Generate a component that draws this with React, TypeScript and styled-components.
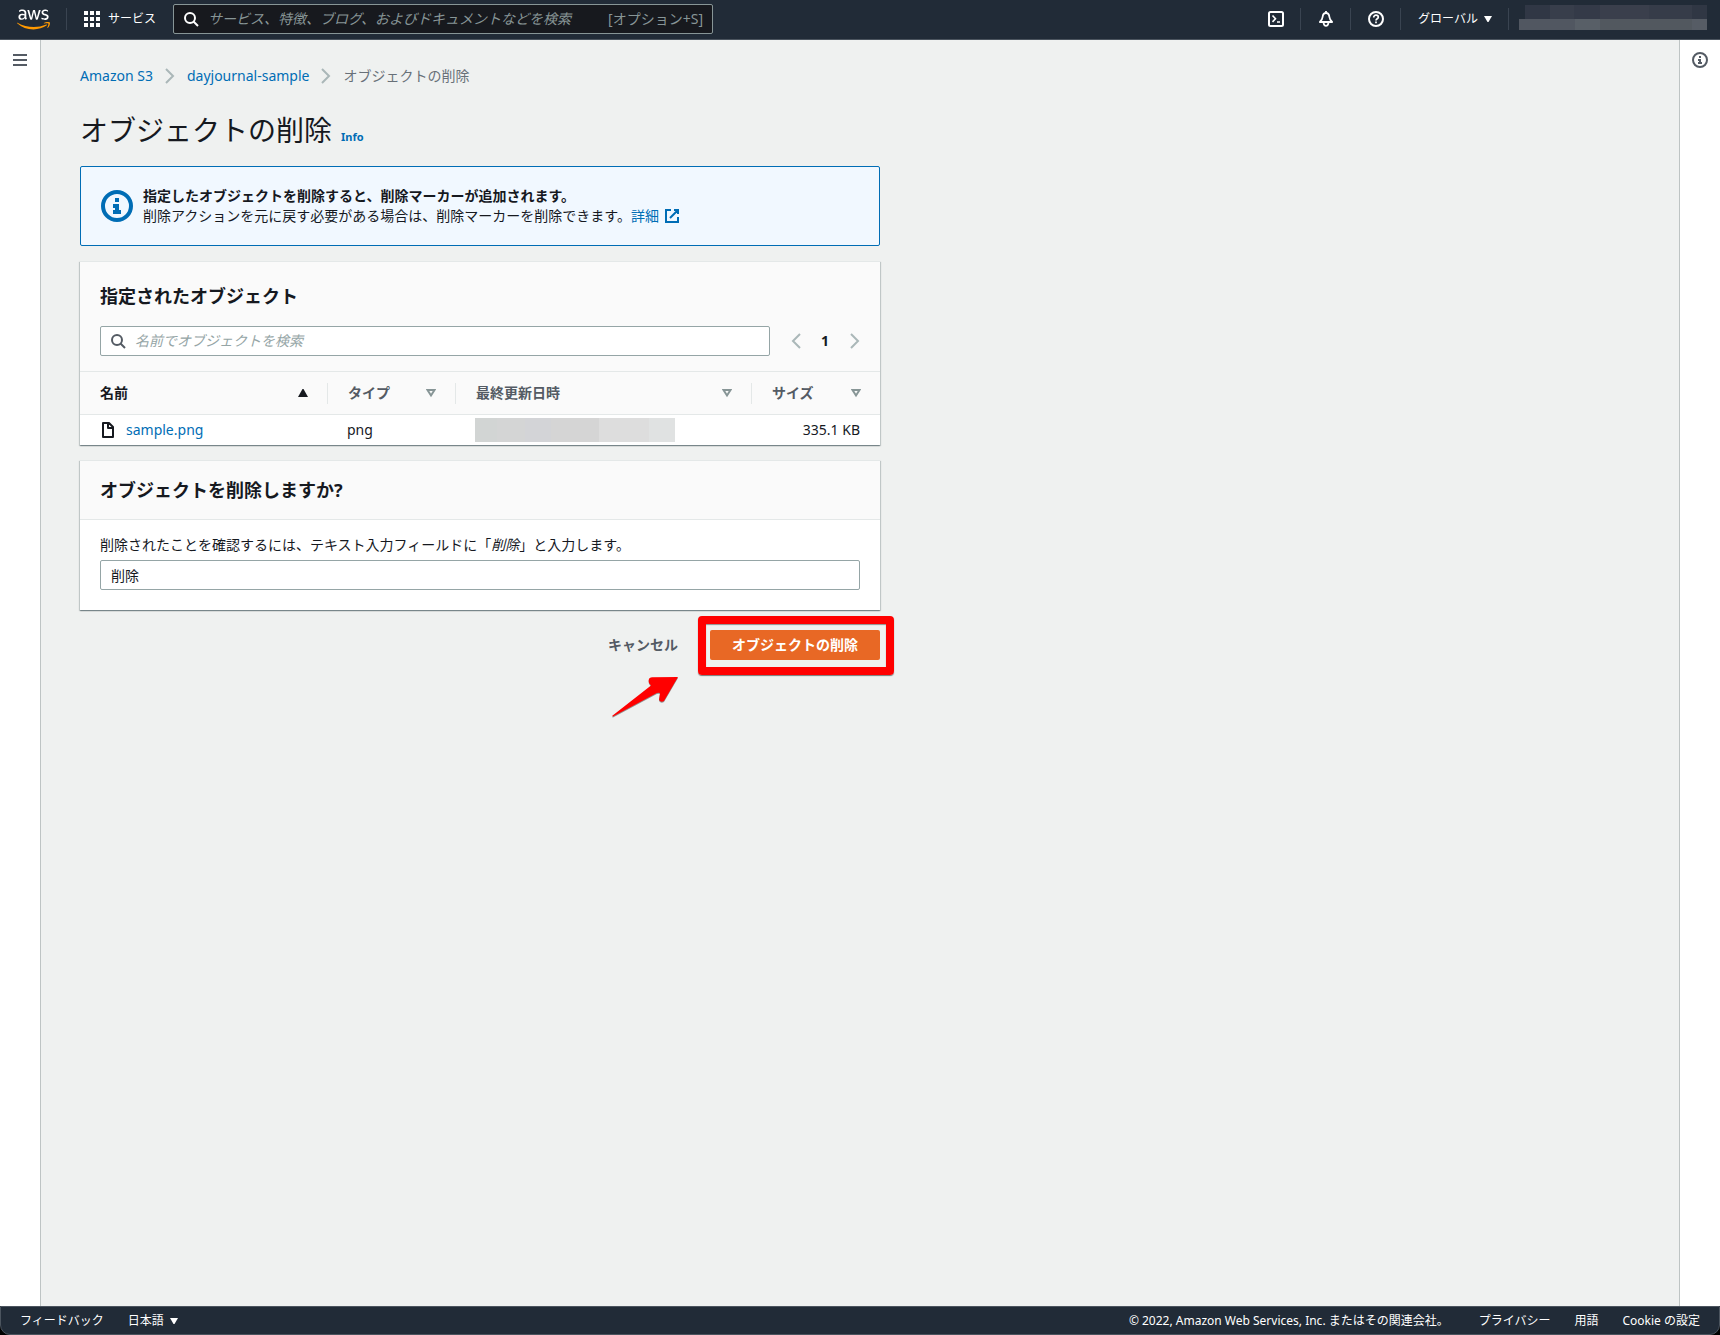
import React, { useState } from 'react';
import styled, { createGlobalStyle, css } from 'styled-components';
import { FaAws } from 'react-icons/fa';

const fontStack = `"Noto Sans", "Noto Sans CJK JP", sans-serif`;

const color = {
  nav: '#212b37',
  navDark: '#17191e',
  navBorder: '#4b545e',
  page: '#eff1f0',
  white: '#ffffff',
  panelHead: '#fafafa',
  line: '#e4e8e8',
  inputLine: '#95a5a6',
  muted: '#545b64',
  faint: '#879596',
  placeholder: '#95a5a6',
  text: '#16191f',
  link: '#006db5',
  info: '#f1f8ff',
  orange: '#e86825',
  red: '#ff0000',
};

const GlobalStyle = createGlobalStyle`
  *, *::before, *::after { box-sizing: border-box; }
  body {
    margin: 0;
    background: #000;
    color: ${color.text};
    font-family: ${fontStack};
    font-size: 14px;
    line-height: 20px;
  }
  h1, h2, p, ol { margin: 0; padding: 0; }
  button, input { font: inherit; color: inherit; }
  a { color: ${color.link}; text-decoration: none; }
`;

const Shell = styled.div`
  min-height: 100vh;
  display: flex;
  flex-direction: column;
`;

/* ---------- icons ---------- */

const Glyph = styled.svg<{ $size?: number }>`
  display: block;
  flex: none;
  width: ${(p) => p.$size ?? 16}px;
  height: ${(p) => p.$size ?? 16}px;
  fill: none;
  stroke: currentColor;
  stroke-width: 2;
`;

type IconProps = { size?: number };

const SearchIcon = () => (
  <Glyph viewBox="0 0 16 16" aria-hidden="true">
    <circle cx="7" cy="7" r="5" />
    <path d="M15 15l-4.5-4.5" />
  </Glyph>
);

const InfoIcon = ({ size }: IconProps) => (
  <Glyph viewBox="0 0 16 16" $size={size} aria-hidden="true">
    <circle cx="8" cy="8" r="7" />
    <path d="M8 11V8H6M6 11h4M8 6V4" />
  </Glyph>
);

const ExternalIcon = () => (
  <Glyph viewBox="0 0 16 16" aria-hidden="true">
    <path d="M10 2h4v4M6 10l8-8M14 9v5H2V2h5" />
  </Glyph>
);

const FileIcon = () => (
  <Glyph viewBox="0 0 16 16" aria-hidden="true">
    <path d="M3 1v14h10V5L9 1zM8 1v5h5" strokeLinejoin="round" />
  </Glyph>
);

const AngleRight = () => (
  <Glyph viewBox="0 0 16 16" aria-hidden="true">
    <path d="M4 1l7 7-7 7" />
  </Glyph>
);

const PageBack = () => (
  <Glyph viewBox="0 0 16 16" aria-hidden="true">
    <path d="M10 1L3 8l7 7" />
  </Glyph>
);

const PageForward = () => (
  <Glyph viewBox="0 0 16 16" aria-hidden="true">
    <path d="M7 1l7 7-7 7" />
  </Glyph>
);

const MenuIcon = () => (
  <Glyph viewBox="0 0 16 16" aria-hidden="true">
    <path d="M1 3h14M1 8h14M1 13h14" />
  </Glyph>
);

const GridIcon = () => (
  <Glyph viewBox="0 0 16 16" aria-hidden="true">
    <path
      d="M0 0h4v4H0zM6 0h4v4H6zM12 0h4v4h-4zM0 6h4v4H0zM6 6h4v4H6zM12 6h4v4h-4zM0 12h4v4H0zM6 12h4v4H6zM12 12h4v4h-4z"
      fill="currentColor"
      stroke="none"
    />
  </Glyph>
);

const ShellIcon = () => (
  <Glyph viewBox="0 0 16 16" aria-hidden="true">
    <rect x="1" y="1" width="14" height="14" rx="1.5" />
    <path d="M4.5 4.5L7.5 7.700l-3 3.200M9 11h3" strokeWidth="1.600" />
  </Glyph>
);

const BellIcon = () => (
  <Glyph viewBox="0 0 16 16" aria-hidden="true">
    <path
      d="M8 2C5.600 2 4.800 3.800 4.600 6c-.2 2-.9 3.200-2.700 5h12.200c-1.800-1.800-2.500-3-2.700-5C11.200 3.800 10.400 2 8 2zM8 0v2"
      strokeWidth="1.800"
      strokeLinejoin="round"
    />
    <path d="M5.600 12c.2 1.800 1.200 2.900 2.400 2.900s2.200-1.100 2.400-2.900" strokeWidth="1.800" />
  </Glyph>
);

const HelpIcon = () => (
  <Glyph viewBox="0 0 16 16" aria-hidden="true">
    <circle cx="8" cy="8" r="7" />
    <path d="M5.700 6.500C5.700 5 6.700 4.200 8 4.200s2.300.8 2.300 2c0 1.500-2.300 1.600-2.300 3.300M8 10.600v1.700" strokeWidth="1.700" />
  </Glyph>
);

const CaretDown = () => (
  <Glyph viewBox="0 0 8 8" $size={8} aria-hidden="true">
    <path d="M0 1h8L4.500 7h-1z" fill="currentColor" stroke="none" />
  </Glyph>
);

const SortAsc = () => (
  <Glyph viewBox="0 0 10 10" $size={10} aria-hidden="true">
    <path d="M0 9h10L5.500 1h-1z" fill="currentColor" stroke="none" />
  </Glyph>
);

const SortNone = () => (
  <Glyph viewBox="0 0 10 10" $size={10} aria-hidden="true">
    <path d="M1.500 2h7L5 7.500z" />
  </Glyph>
);

/* ---------- top navigation ---------- */

const TopBar = styled.header`
  display: flex;
  align-items: center;
  height: 40px;
  padding: 0 13px 1px 17px;
  background: ${color.nav};
  border-bottom: 1px solid ${color.navBorder};
  color: ${color.white};
  font-size: 12px;
`;

const LogoLink = styled.a`
  display: flex;
  width: 33px;
  margin-right: 16px;
`;

const GradientDefs = styled.svg`
  position: absolute;
  width: 0;
  height: 0;
`;

const Divider = styled.span`
  width: 1px;
  height: 22px;
  background: #3a4451;
`;

const NavButton = styled.button<{ $right?: number; $gap?: number }>`
  display: flex;
  align-items: center;
  gap: ${(p) => p.$gap ?? 6}px;
  border: 0;
  padding: 0 ${(p) => p.$right ?? 16}px 0 17px;
  background: none;
  cursor: pointer;
`;

const GlobalSearch = styled.form`
  display: flex;
  align-items: center;
  flex: 0 1 540px;
  height: 30px;
  padding: 0 9px;
  gap: 9px;
  border: 1px solid ${color.faint};
  border-radius: 2px;
  background: ${color.navDark};
  font-size: 14px;
`;

const BareInput = styled.input<{ $tone: string }>`
  flex: 1;
  min-width: 0;
  border: 0;
  outline: 0;
  padding: 0;
  background: transparent;
  &::placeholder {
    color: ${(p) => p.$tone};
    font-style: italic;
    opacity: 1;
  }
`;

const Shortcut = styled.span`
  color: ${color.faint};
`;

const NavRight = styled.div`
  display: flex;
  align-items: center;
  margin-left: auto;
`;

const Account = styled.div`
  display: flex;
  flex-direction: column;
  width: 188px;
  margin-left: 10px;
  padding-bottom: 3px;
`;

const AccountTop = styled.span`
  height: 14px;
  margin-left: 6px;
  background: linear-gradient(90deg, #303745 14%, #383e4b 14% 27%, #343a48 27% 41%, #3a3f4c 41% 68%, #363c49 68% 92%, #303744 92%);
`;

const AccountBottom = styled.span`
  height: 11px;
  background: linear-gradient(90deg, #515761 30%, #585f67 30% 43%, #52585f 43% 92%, #565c65 92%);
`;

/* ---------- page frame ---------- */

const Frame = styled.div`
  flex: 1;
  display: grid;
  grid-template-columns: 41px minmax(0, 1fr) 41px;
  background: ${color.page};
`;

const Rail = styled.aside<{ $side: 'left' | 'right' }>`
  display: flex;
  align-items: flex-start;
  justify-content: center;
  padding-top: 12px;
  background: ${color.white};
  color: ${color.muted};
  ${(p) =>
    p.$side === 'left'
      ? css`border-right: 1px solid #bec4c4;`
      : css`border-left: 1px solid #bec4c4;`}
`;

const IconButton = styled.button`
  display: flex;
  border: 0;
  padding: 0;
  background: none;
  color: inherit;
  cursor: pointer;
`;

const Main = styled.main`
  padding: 26px 39px 40px;
`;

const Column = styled.div`
  max-width: 800px;
`;

const Crumbs = styled.ol`
  display: flex;
  align-items: center;
  gap: 9px;
  list-style: none;
  color: #687078;
`;

const CrumbSeparator = styled.li`
  color: #aab7b8;
`;

const TitleRow = styled.div`
  display: flex;
  align-items: baseline;
  gap: 9px;
  margin: 26px 0 18px;
`;

const Title = styled.h1`
  font-size: 28px;
  line-height: 36px;
  font-weight: 400;
`;

const InfoLink = styled.a`
  font-size: 11px;
  font-weight: 700;
`;

const Stack = styled.div`
  display: flex;
  flex-direction: column;
  gap: 15px;
`;

const Alert = styled.section`
  display: flex;
  align-items: center;
  gap: 10px;
  padding: 19px 20px;
  border: 1px solid ${color.link};
  border-radius: 2px;
  background: ${color.info};
`;

const AlertIcon = styled.span`
  color: ${color.link};
`;

const ExternalLink = styled.a`
  display: inline-flex;
  align-items: center;
  gap: 5px;
  vertical-align: top;
`;

/* ---------- panels ---------- */

const Panel = styled.section`
  border-top: 1px solid ${color.line};
  background: ${color.white};
  box-shadow: 0 1px 1px 0 rgba(0, 28, 36, 0.3), 1px 1px 1px 0 rgba(0, 28, 36, 0.15),
    -1px 1px 1px 0 rgba(0, 28, 36, 0.15);
`;

const PanelHead = styled.div<{ $tall?: boolean }>`
  padding: ${(p) => (p.$tall ? '23px 20px 15px' : '18px 20px')};
  border-bottom: 1px solid ${color.line};
  background: ${color.panelHead};
`;

const Heading = styled.h2`
  font-size: 18px;
  line-height: 22px;
  font-weight: 700;
`;

const Tools = styled.div`
  display: flex;
  align-items: center;
  gap: 20px;
  margin-top: 19px;
`;

const FilterBox = styled.label`
  display: flex;
  align-items: center;
  flex: 1;
  height: 30px;
  padding: 0 9px;
  gap: 9px;
  border: 1px solid ${color.inputLine};
  border-radius: 2px;
  background: ${color.white};
  color: ${color.muted};
`;

const Pager = styled.nav`
  display: flex;
  align-items: center;
  justify-content: space-between;
  width: 70px;
  color: #aab7b8;
`;

const PageNumber = styled.span`
  color: ${color.text};
  font-weight: 700;
`;

const Table = styled.table`
  width: 100%;
  table-layout: fixed;
  border-collapse: separate;
  border-spacing: 0;
`;

const HeaderCell = styled.th<{ $width: string }>`
  width: ${(p) => p.$width};
  height: 43px;
  padding: 0;
  border-bottom: 1px solid ${color.line};
  background: ${color.panelHead};
  text-align: left;
`;

const HeaderInner = styled.div<{ $active?: boolean; $last?: boolean }>`
  display: flex;
  align-items: center;
  justify-content: space-between;
  height: 21px;
  padding: 0 19px 0 20px;
  border-right: ${(p) => (p.$last ? '0' : `1px solid ${color.line}`)};
  color: ${(p) => (p.$active ? color.text : color.muted)};
`;

const SortMark = styled.span<{ $active?: boolean }>`
  color: ${(p) => (p.$active ? color.text : color.faint)};
`;

const Cell = styled.td<{ $right?: boolean }>`
  height: 30px;
  padding: 0 20px 0 19px;
  text-align: ${(p) => (p.$right ? 'right' : 'left')};
  &:first-child { padding-left: 20px; }
`;

const ObjectName = styled.span`
  display: flex;
  align-items: center;
  gap: 10px;
`;

const HiddenDate = styled.div`
  width: 200px;
  height: 24px;
  background: linear-gradient(90deg, #d2d5d4 11%, #d4d5d5 11% 25%, #d3d4d7 25% 38%, #d5d5d5 38% 62%, #dddddd 62% 87%, #e0e2e2 87%);
`;

const PanelBody = styled.div`
  padding: 15px 20px 20px;
`;

const FieldLabel = styled.label`
  display: block;
  margin-bottom: 5px;
`;

const TextField = styled.input`
  display: block;
  width: 100%;
  height: 30px;
  padding: 0 10px;
  border: 1px solid ${color.inputLine};
  border-radius: 2px;
  background: ${color.white};
  outline: 0;
`;

/* ---------- actions ---------- */

const Actions = styled.div`
  position: relative;
  display: flex;
  justify-content: flex-end;
  gap: 10px;
  margin-top: 20px;
`;

const Button = styled.button<{ $primary?: boolean }>`
  height: 30px;
  padding: 0 22px;
  border: 0;
  border-radius: 2px;
  background: ${(p) => (p.$primary ? color.orange : 'transparent')};
  color: ${(p) => (p.$primary ? color.white : color.muted)};
  font-weight: 700;
  cursor: pointer;
`;

const Highlight = styled.span`
  position: absolute;
  top: -14px;
  right: -14px;
  width: 196px;
  height: 59px;
  border: 8px solid ${color.red};
  border-radius: 4px;
  box-shadow: 0 1px 1px rgba(0, 0, 0, 0.5), inset 0 1px 1px rgba(0, 0, 0, 0.4);
  pointer-events: none;
`;

const Arrow = styled.svg`
  position: absolute;
  top: 46px;
  right: 200px;
  width: 70px;
  height: 42px;
  filter: drop-shadow(0 1px 0 rgba(0, 0, 0, 0.4));
`;

/* ---------- footer ---------- */

const Footer = styled.footer`
  display: flex;
  align-items: center;
  height: 29px;
  padding: 0 19px;
  border: 1px solid ${color.navBorder};
  border-radius: 0 0 10px 10px;
  background: ${color.nav};
  color: ${color.white};
  font-size: 12px;
  a { color: inherit; }
`;

const FooterGroup = styled.div<{ $end?: boolean }>`
  display: flex;
  align-items: center;
  gap: 24px;
  margin-left: ${(p) => (p.$end ? 'auto' : '0')};
`;

const LanguageButton = styled(NavButton)`
  padding: 0;
`;

const Copyright = styled.span`
  margin-right: 6px;
`;

const columns = [
  { label: '名前', width: '31%', active: true },
  { label: 'タイプ', width: '16%' },
  { label: '最終更新日時', width: '37%' },
  { label: 'サイズ', width: '16%' },
];

export default function App() {
  const [confirm, setConfirm] = useState('削除');

  return (
    <Shell>
      <GlobalStyle />
      <TopBar>
        <GradientDefs aria-hidden="true">
          <defs>
            <linearGradient id="awsFill" x1="0" y1="0" x2="0" y2="1">
              <stop offset="0.64" stopColor="#ffffff" />
              <stop offset="0.64" stopColor="#ff9900" />
            </linearGradient>
          </defs>
        </GradientDefs>
        <LogoLink href="#" aria-label="aws">
          <FaAws size={33} fill="url(#awsFill)" />
        </LogoLink>
        <Divider />
        <NavButton type="button" $right={17} $gap={8}>
          <GridIcon />
          サービス
        </NavButton>
        <GlobalSearch role="search" onSubmit={(e) => e.preventDefault()}>
          <SearchIcon />
          <BareInput
            type="search"
            $tone={color.faint}
            aria-label="サービスを検索"
            placeholder="サービス、特徴、ブログ、およびドキュメントなどを検索"
          />
          <Shortcut>[オプション+S]</Shortcut>
        </GlobalSearch>
        <NavRight>
          <NavButton type="button" aria-label="CloudShell"><ShellIcon /></NavButton>
          <Divider />
          <NavButton type="button" aria-label="通知"><BellIcon /></NavButton>
          <Divider />
          <NavButton type="button" aria-label="サポート"><HelpIcon /></NavButton>
          <Divider />
          <NavButton type="button">
            グローバル
            <CaretDown />
          </NavButton>
          <Divider />
          <Account>
            <AccountTop />
            <AccountBottom />
          </Account>
        </NavRight>
      </TopBar>

      <Frame>
        <Rail $side="left">
          <IconButton type="button" aria-label="メニュー"><MenuIcon /></IconButton>
        </Rail>
        <Main>
          <Column>
            <nav aria-label="パンくず">
              <Crumbs>
                <li><a href="#">Amazon S3</a></li>
                <CrumbSeparator><AngleRight /></CrumbSeparator>
                <li><a href="#">dayjournal-sample</a></li>
                <CrumbSeparator><AngleRight /></CrumbSeparator>
                <li>オブジェクトの削除</li>
              </Crumbs>
            </nav>
            <TitleRow>
              <Title>オブジェクトの削除</Title>
              <InfoLink href="#">Info</InfoLink>
            </TitleRow>

            <Stack>
              <Alert>
                <AlertIcon><InfoIcon size={32} /></AlertIcon>
                <div>
                  <p><strong>指定したオブジェクトを削除すると、削除マーカーが追加されます。</strong></p>
                  <p>
                    削除アクションを元に戻す必要がある場合は、削除マーカーを削除できます。
                    <ExternalLink href="#">詳細 <ExternalIcon /></ExternalLink>
                  </p>
                </div>
              </Alert>

              <Panel>
                <PanelHead $tall>
                  <Heading>指定されたオブジェクト</Heading>
                  <Tools>
                    <FilterBox>
                      <SearchIcon />
                      <BareInput
                        type="search"
                        $tone={color.placeholder}
                        aria-label="名前でオブジェクトを検索"
                        placeholder="名前でオブジェクトを検索"
                      />
                    </FilterBox>
                    <Pager aria-label="ページ">
                      <IconButton type="button" aria-label="前へ"><PageBack /></IconButton>
                      <PageNumber>1</PageNumber>
                      <IconButton type="button" aria-label="次へ"><PageForward /></IconButton>
                    </Pager>
                  </Tools>
                </PanelHead>
                <Table>
                  <thead>
                    <tr>
                      {columns.map((c, i) => (
                        <HeaderCell key={c.label} $width={c.width} scope="col">
                          <HeaderInner $active={c.active} $last={i === columns.length - 1}>
                            {c.label}
                            <SortMark $active={c.active}>
                              {c.active ? <SortAsc /> : <SortNone />}
                            </SortMark>
                          </HeaderInner>
                        </HeaderCell>
                      ))}
                    </tr>
                  </thead>
                  <tbody>
                    <tr>
                      <Cell>
                        <ObjectName>
                          <FileIcon />
                          <a href="#">sample.png</a>
                        </ObjectName>
                      </Cell>
                      <Cell>png</Cell>
                      <Cell><HiddenDate /></Cell>
                      <Cell $right>335.1 KB</Cell>
                    </tr>
                  </tbody>
                </Table>
              </Panel>

              <Panel>
                <PanelHead>
                  <Heading>オブジェクトを削除しますか?</Heading>
                </PanelHead>
                <PanelBody>
                  <FieldLabel htmlFor="confirm">
                    削除されたことを確認するには、テキスト入力フィールドに「<em>削除</em>」と入力します。
                  </FieldLabel>
                  <TextField id="confirm" value={confirm} onChange={(e) => setConfirm(e.target.value)} />
                </PanelBody>
              </Panel>
            </Stack>

            <Actions>
              <Button type="button">キャンセル</Button>
              <Button type="button" $primary>オブジェクトの削除</Button>
              <Highlight />
              <Arrow viewBox="0 0 70 42" aria-hidden="true">
                <path
                  d="M2 40L41 9.500L39 7Q37.500 1.500 42 1.200L68 1L54 25Q51 27 49 24L50 17Q48 16 45 18L3 40.500Z"
                  fill="#ff0000"
                />
              </Arrow>
            </Actions>
          </Column>
        </Main>
        <Rail $side="right">
          <IconButton type="button" aria-label="情報"><InfoIcon /></IconButton>
        </Rail>
      </Frame>

      <Footer>
        <FooterGroup>
          <a href="#">フィードバック</a>
          <LanguageButton type="button">
            日本語
            <CaretDown />
          </LanguageButton>
        </FooterGroup>
        <FooterGroup $end>
          <Copyright>© 2022, Amazon Web Services, Inc. またはその関連会社。</Copyright>
          <a href="#">プライバシー</a>
          <a href="#">用語</a>
          <a href="#">Cookie の設定</a>
        </FooterGroup>
      </Footer>
    </Shell>
  );
}
